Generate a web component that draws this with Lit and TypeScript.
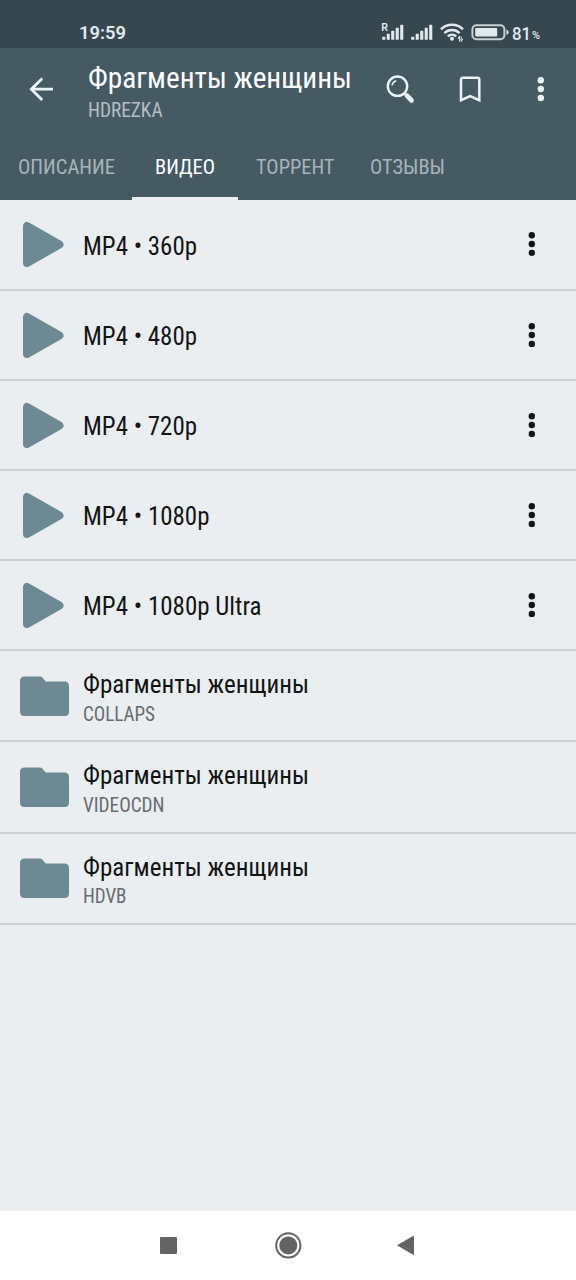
import { LitElement, html, css, svg } from "lit";
import { customElement, property } from "lit/decorators.js";

@customElement("condensed-text")
class CondensedText extends LitElement {
  @property() text = "";
  @property({ type: Number }) width = 100;
  static styles = css`
    :host { display: block; height: 1.2em; }
    svg { display: block; height: 1.2em; overflow: visible; }
    text { fill: currentColor; }
  `;
  render() {
    return html`<svg width=${this.width}>
      <text y="0.95em" textLength=${this.width} lengthAdjust="spacingAndGlyphs">${this.text}</text>
    </svg>`;
  }
}

@customElement("status-bar")
class StatusBar extends LitElement {
  static styles = css`
    :host { display: flex; height: 48px; background: #37474f; color: #e2e9ed; box-sizing: border-box; padding: 0 34px 0 79px; justify-content: space-between; font-family: Roboto, sans-serif; font-stretch: 100%; }
    .time { padding-top: 22px; font-size: 18px; line-height: 22px; font-weight: 600; height: 22px; }
    .right { display: flex; padding-top: 22px; }
    svg { display: block; overflow: visible; }
    .level { font-size: 18.5px; line-height: 21px; font-weight: 500; }
  `;
  render() {
    const bars = (x: number) => [0, 1, 2, 3, 4].map(i => {
      const h = [3, 6, 9, 12, 15][i];
      return svg`<rect x=${x + i * 4.5} y=${17.8 - h} width="3.1" height=${h} rx=".6"/>`;
    });
    return html`
      <condensed-text class="time" text="19:59" width="47"></condensed-text>
      <div class="right">
        <svg width="130" height="24" viewBox="0 0 130 24" fill="currentColor">
          <text x="-.8" y="8.8" font-size="10.5" font-weight="600">R</text>
          ${bars(.2)}${bars(29.2)}
          <g fill="none" stroke="currentColor" stroke-width="2.5">
            <path d="M59 7.4a15.5 15.5 0 0 1 22 0M62.4 11.1a10.8 10.8 0 0 1 15.2 0M65.8 14.3a6.2 6.2 0 0 1 8.4 0"/>
          </g>
          <circle cx="70" cy="16.8" r="2"/>
          <path d="M76 17l1.5-3v5.5M79.2 14.5v5l1.6-2.6" fill="none" stroke="currentColor" stroke-width="1"/>
          <rect x="90.4" y="3.2" width="32" height="14" rx="4" fill="none" stroke="currentColor" stroke-width="2" opacity=".85"/>
          <rect x="93.2" y="6" width="22" height="8.6" rx="1"/>
          <path d="M124.5 7.5q2 .5 2 2.8t-2 2.8z"/>
        </svg>
        <condensed-text class="level" text="81" width="19"></condensed-text>
        <svg width="11" height="20"><text x="1" y="16.5" font-size="10" font-weight="500" fill="currentColor" textLength="8" lengthAdjust="spacingAndGlyphs">%</text></svg>
      </div>`;
  }
}

@customElement("more-dots")
class MoreDots extends LitElement {
  static styles = css`:host { display: block; } svg { display: block; }`;
  render() {
    return html`<svg width="8" height="26" fill="currentColor">
      <circle cx="3.8" cy="4.2" r="3.2"/><circle cx="3.8" cy="13" r="3.2"/><circle cx="3.8" cy="21.9" r="3.2"/></svg>`;
  }
}

@customElement("title-bar")
class TitleBar extends LitElement {
  static styles = css`
    :host { display: flex; height: 82px; color: #edf4f8; }
    svg { display: block; }
    .back { width: 60px; flex: none; }
    .names { flex: 1; padding: 12px 0 0 28px; }
    .title { font-size: 29.6px; color: #fff; height: 38px; }
    .source { font-size: 19.5px; color: #b5bfc5; }
    .actions { display: flex; padding: 26px 31px 0 0; }
    .bookmark { margin: 2px 0 0 44px; }
    .more { margin: 2px 0 0 56px; }
  `;
  render() {
    return html`
      <svg class="back" viewBox="0 0 60 54" width="60" height="54"><path d="M53 41.2H31.5M42.2 30.4L31.3 41.2l10.9 10.9" fill="none" stroke="currentColor" stroke-width="2.8"/></svg>
      <div class="names">
        <condensed-text class="title" text="Фрагменты женщины" width="264"></condensed-text>
        <condensed-text class="source" text="HDREZKA" width="74.5"></condensed-text>
      </div>
      <div class="actions">
        <svg width="30" height="30" fill="none" stroke="currentColor">
          <circle cx="12.5" cy="12.2" r="9.7" stroke-width="2.4"/>
          <path d="M7 11.4a6 6 0 0 1 4.2-4.7" stroke-width="1.6"/>
          <path d="M19.2 19l3 3" stroke-width="2"/>
          <path d="M22 21.7l4.5 4.7" stroke-width="4.8" stroke-linecap="round"/>
        </svg>
        <svg class="bookmark" width="22" height="28"><path d="M2 24.2V3.6q0-1.8 1.8-1.8h14.7q1.8 0 1.8 1.8v20.6l-9.1-4.1z" fill="none" stroke="currentColor" stroke-width="2.5"/></svg>
        <more-dots class="more"></more-dots>
      </div>`;
  }
}

@customElement("tab-strip")
class TabStrip extends LitElement {
  static styles = css`
    :host { display: flex; height: 70.4px; color: #a9b4b9; font-size: 20.5px; }
    .tab { height: 70.4px; box-sizing: border-box; padding: 24.6px 0 0; }
    .on { color: #fff; border-bottom: 3.5px solid #eceff1; }
  `;
  render() {
    const tabs: [string, number, number, number][] = [
      ["ОПИСАНИЕ", 97, 18, 132], ["ВИДЕО", 60, 23, 106], ["ТОРРЕНТ", 78.5, 17.5, 114], ["ОТЗЫВЫ", 75, 18, 110],
    ];
    return html`${tabs.map(([t, w, p, full], i) => html`
      <div class="tab ${i === 1 ? "on" : ""}" style="width:${full}px;padding-left:${p}px">
        <condensed-text .text=${t} .width=${w}></condensed-text>
      </div>`)}`;
  }
}

@customElement("media-row")
class MediaRow extends LitElement {
  @property() name = "";
  @property() source = "";
  @property({ type: Number }) width = 100;
  @property({ type: Number }) sub = 0;
  static styles = css`
    :host { display: flex; align-items: center; height: 90.2px; box-sizing: border-box; border-bottom: 2px solid #cdd2d5; color: #111415; padding-right: 40px; }
    :host([folder]) { height: 91.1px; }
    .icon { display: block; width: 63px; height: 50px; margin-left: 20px; fill: #6d8993; stroke: #6d8993; flex: none; }
    .text { flex: 1; padding-top: 3px; }
    .name { font-size: 25.5px; }
    .source { font-size: 19.5px; color: #676c6f; margin-top: 2px; }
  `;
  render() {
    return html`
      ${this.source
        ? html`<svg class="icon" viewBox="0 0 63 50"><path stroke="none" d="M4.5 5.5H20q1.5 0 2.5 1.2l3.2 3.8H44.5q4.5 0 4.5 4.5v25.5q0 4.5-4.5 4.5h-40q-4.5 0-4.5-4.5v-30.5Q0 5.5 4.5 5.5z"/></svg>`
        : html`<svg class="icon" viewBox="0 0 63 50"><path d="M7 7v37L39.5 25.5z" stroke-width="8" stroke-linejoin="round"/></svg>`}
      <div class="text">
        <condensed-text class="name" .text=${this.name} .width=${this.width}></condensed-text>
        ${this.source ? html`<condensed-text class="source" .text=${this.source} .width=${this.sub}></condensed-text>` : ""}
      </div>
      ${this.source ? "" : html`<more-dots></more-dots>`}`;
  }
}

@customElement("nav-bar")
class NavBar extends LitElement {
  static styles = css`
    :host { display: flex; height: 69px; background: #fff; }
    svg { display: block; fill: #636363; margin: 20px 0 0 154px; }
    svg + svg { margin-left: 92px; }
  `;
  render() {
    return html`
      <svg width="28" height="28"><rect x="6" y="6" width="17" height="17" rx="1"/></svg>
      <svg width="28" height="28"><circle cx="14.3" cy="14.4" r="12.1" fill="none" stroke="#636363" stroke-width="2"/><circle cx="14.3" cy="14.4" r="9"/></svg>
      <svg width="28" height="28"><path d="M3 14.3L19 5.1q1-.4 1 .6v17.4q0 1-1 .6z"/></svg>`;
  }
}

@customElement("app-root")
class AppRoot extends LitElement {
  static styles = css`
    :host { display: flex; flex-direction: column; height: 1280px; width: 576px; overflow: hidden; background: #eaeef1; font-family: "Roboto Condensed", Roboto, sans-serif; font-stretch: 75%; }
    .head { background: #465a64; height: 152.4px; flex: none; }
    .list { flex: 1; }
  `;
  render() {
    const files: [string, number][] = [
      ["MP4 • 360p", 114], ["MP4 • 480p", 114], ["MP4 • 720p", 114], ["MP4 • 1080p", 126.5], ["MP4 • 1080p Ultra", 178.5],
    ];
    const folders: [string, number][] = [["COLLAPS", 72], ["VIDEOCDN", 81.5], ["HDVB", 43.5]];
    return html`
      <status-bar></status-bar>
      <div class="head"><title-bar></title-bar><tab-strip></tab-strip></div>
      <div class="list">
        ${files.map(([n, w]) => html`<media-row .name=${n} .width=${w}></media-row>`)}
        ${folders.map(([s, w]) => html`<media-row folder name="Фрагменты женщины" .width=${226} .source=${s} .sub=${w}></media-row>`)}
      </div>
      <nav-bar></nav-bar>`;
  }
}
